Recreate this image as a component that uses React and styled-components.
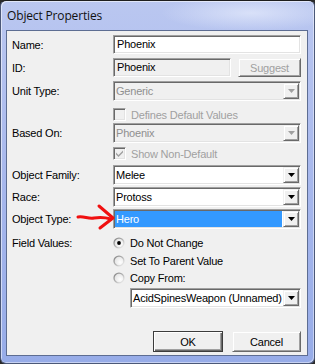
import React from "react";
import styled, { createGlobalStyle, css } from "styled-components";

const GlobalStyle = createGlobalStyle`
  html, body { margin: 0; padding: 0; background: #2a2a2a; }
  body { font-family: "Liberation Sans", Arial, sans-serif; }
  * { box-sizing: border-box; }
`;

const uiText = css`
  font-family: "Liberation Sans", Arial, sans-serif;
  font-size: 11px;
  letter-spacing: -0.2px;
`;

const Window = styled.div`
  position: relative;
  width: 315px;
  height: 364px;
  display: flex;
  flex-direction: column;
  padding: 0 6px 7px 5px;
  border: 1px solid #4b5878;
  border-top-color: #1e1e1e;
  border-radius: 6px;
  background:
    radial-gradient(ellipse 90px 18px at 250px 12px, rgba(230, 236, 252, 0.7), rgba(230, 236, 252, 0) 100%),
    linear-gradient(180deg, #bac7f0 0%, #b3c1ef 20%, #a5b6ec 55%, #97ace8 100%);
  box-shadow: inset 1px 1px 0 rgba(255, 255, 255, 0.55), inset -1px -1px 0 rgba(255, 255, 255, 0.45);
`;

const TitleBar = styled.div`
  height: 29px;
  display: flex;
  align-items: center;
  padding-left: 1px;
  padding-bottom: 1px;
`;

const Title = styled.span`
  font-family: "Open Sans", "Noto Sans", sans-serif;
  font-size: 12px;
  color: #111;
  letter-spacing: -0.15px;
`;

const Client = styled.div`
  flex: 1;
  background: #f0f0f0;
  border: 1px solid #5d6d92;
  padding: 4px 6px 0 5px;
  display: flex;
  flex-direction: column;
  ${uiText};
  color: #000;
`;

const Row = styled.div`
  position: relative;
  display: grid;
  grid-template-columns: 101px 188px;
  align-items: center;
  height: ${(p) => p.$h}px;
  margin-top: ${(p) => p.$mt || 0}px;
`;

const Label = styled.span`
  ${uiText};
  color: #000;
  white-space: nowrap;
`;

const sunken = css`
  border: 1px solid;
  border-color: #a0a0a0 #ffffff #ffffff #a0a0a0;
  box-shadow: inset 1px 1px 0 #696969, inset -1px -1px 0 #e3e3e3;
`;

const raised = css`
  border: 1px solid;
  border-color: #f0f0f0 #696969 #696969 #f0f0f0;
  box-shadow: inset 1px 1px 0 #ffffff, inset -1px -1px 0 #a0a0a0;
`;

const Edit = styled.div`
  ${sunken};
  height: 19px;
  width: ${(p) => p.$w || 188}px;
  background: ${(p) => (p.$readOnly ? "#f0f0f0" : "#ffffff")};
  padding: 0 3px;
  line-height: 17px;
  ${uiText};
  color: #000;
  white-space: nowrap;
`;

const FieldGroup = styled.div`
  display: flex;
  align-items: center;
  gap: ${(p) => p.$gap || 0}px;
  padding-left: ${(p) => p.$indent || 0}px;
`;

const PushButton = styled.button`
  ${raised};
  width: ${(p) => p.$w}px;
  height: ${(p) => p.$h}px;
  background: #f0f0f0;
  ${uiText};
  color: ${(p) => (p.disabled ? "#a0a0a0" : "#000")};
  padding: 0;
  ${(p) =>
    p.$default &&
    css`
      border: 1px solid #3c3c3c;
      box-shadow: inset 1px 1px 0 #ffffff, inset -1px -1px 0 #696969, inset -2px -2px 0 #a0a0a0;
    `}
`;

const ComboBox = styled.div`
  ${sunken};
  height: 20px;
  width: ${(p) => p.$w || 188}px;
  padding: 1px;
  display: flex;
  background: ${(p) => (p.$disabled ? "#f0f0f0" : "#ffffff")};
`;

const ComboText = styled.div`
  flex: 1;
  display: flex;
  align-items: center;
  padding-left: 1px;
  margin-right: 1px;
  ${uiText};
  white-space: nowrap;
  overflow: hidden;
  color: ${(p) => (p.$disabled ? "#8f8f8f" : p.$selected ? "#ffffff" : "#000")};
  background: ${(p) => (p.$selected ? "#3399ff" : "transparent")};
`;

const DropButton = styled.div`
  ${raised};
  flex: none;
  width: 16px;
  height: 16px;
  background: #f0f0f0;
  display: flex;
  align-items: center;
  justify-content: center;
  color: ${(p) => (p.$disabled ? "#a0a0a0" : "#000")};
`;

const CheckBox = styled.div`
  ${sunken};
  width: 13px;
  height: 13px;
  background: ${(p) => (p.$disabled ? "#f0f0f0" : "#ffffff")};
  display: flex;
  align-items: center;
  justify-content: center;
`;

const OptionText = styled.span`
  ${uiText};
  color: ${(p) => (p.$disabled ? "#a0a0a0" : "#000")};
  white-space: nowrap;
`;

const ButtonBar = styled.div`
  display: flex;
  justify-content: flex-end;
  gap: 9px;
  margin-top: 23px;
`;

const Annotation = styled.svg`
  position: absolute;
  left: 64px;
  top: -4px;
  overflow: visible;
`;

const Arrow = () => (
  <svg width="7" height="4" viewBox="0 0 7 4">
    <path d="M0 0h7L3.5 4z" fill="currentColor" />
  </svg>
);

function Combo({ value, disabled, selected, w }) {
  return (
    <ComboBox $disabled={disabled} $w={w}>
      <ComboText $disabled={disabled} $selected={selected}>{value}</ComboText>
      <DropButton $disabled={disabled}>
        <Arrow />
      </DropButton>
    </ComboBox>
  );
}

function Radio({ checked }) {
  return (
    <svg width="12" height="12" viewBox="0 0 12 12">
      <defs>
        <linearGradient id="rg" x1="0" y1="0" x2="1" y2="1">
          <stop offset="0" stopColor="#7a7a7a" />
          <stop offset="0.5" stopColor="#b5b5b5" />
          <stop offset="1" stopColor="#ffffff" />
        </linearGradient>
        <radialGradient id="rf" cx="0.65" cy="0.65" r="0.7">
          <stop offset="0" stopColor="#ffffff" />
          <stop offset="1" stopColor="#e4e4e4" />
        </radialGradient>
      </defs>
      <circle cx="6" cy="6" r="5.6" fill="url(#rg)" />
      <circle cx="6" cy="6" r="4.3" fill="url(#rf)" />
      {checked && <circle cx="6" cy="6" r="1.9" fill="#000" />}
    </svg>
  );
}

function Check({ checked, disabled }) {
  return (
    <CheckBox $disabled={disabled}>
      {checked && (
        <svg width="7" height="7" viewBox="0 0 7 7">
          <path d="M0 2.5l2.5 2.5L7 0.5v2L2.5 7 0 4.5z" fill="#a0a0a0" />
        </svg>
      )}
    </CheckBox>
  );
}

export default function App() {
  return (
    <>
      <GlobalStyle />
      <Window>
        <TitleBar>
          <Title>Object Properties</Title>
        </TitleBar>
        <Client>
          <Row $h={19}>
            <Label>Name:</Label>
            <Edit>Phoenix</Edit>
          </Row>
          <Row $h={19} $mt={4}>
            <Label>ID:</Label>
            <FieldGroup $gap={7}>
              <Edit $w={118} $readOnly>Phoenix</Edit>
              <PushButton $w={63} $h={19} disabled>Suggest</PushButton>
            </FieldGroup>
          </Row>
          <Row $h={20} $mt={4}>
            <Label>Unit Type:</Label>
            <Combo value="Generic" disabled />
          </Row>
          <Row $h={13} $mt={7}>
            <span />
            <FieldGroup $gap={5}>
              <Check disabled />
              <OptionText $disabled>Defines Default Values</OptionText>
            </FieldGroup>
          </Row>
          <Row $h={20} $mt={2}>
            <Label>Based On:</Label>
            <Combo value="Phoenix" disabled />
          </Row>
          <Row $h={13} $mt={4}>
            <span />
            <FieldGroup $gap={5}>
              <Check disabled checked />
              <OptionText $disabled>Show Non-Default</OptionText>
            </FieldGroup>
          </Row>
          <Row $h={20} $mt={5}>
            <Label>Object Family:</Label>
            <Combo value="Melee" />
          </Row>
          <Row $h={20} $mt={2}>
            <Label>Race:</Label>
            <Combo value="Protoss" />
          </Row>
          <Row $h={20} $mt={2}>
            <Label>Object Type:</Label>
            <Combo value="Hero" selected />
            <Annotation width="40" height="26" viewBox="0 0 40 26">
              <g fill="none" stroke="#f01010" strokeWidth="3" strokeLinecap="round" strokeLinejoin="round">
                <path d="M2 12 C8 11 12 14 18 13 S28 12 35 14" />
                <path d="M23 1 L37 13 L24 23" />
              </g>
            </Annotation>
          </Row>
          <Row $h={13} $mt={7}>
            <Label>Field Values:</Label>
            <FieldGroup $gap={5}>
              <Radio checked />
              <OptionText>Do Not Change</OptionText>
            </FieldGroup>
          </Row>
          <Row $h={13} $mt={5}>
            <span />
            <FieldGroup $gap={5}>
              <Radio />
              <OptionText>Set To Parent Value</OptionText>
            </FieldGroup>
          </Row>
          <Row $h={13} $mt={4}>
            <span />
            <FieldGroup $gap={5}>
              <Radio />
              <OptionText>Copy From:</OptionText>
            </FieldGroup>
          </Row>
          <Row $h={20} $mt={4}>
            <span />
            <FieldGroup $indent={17}>
              <Combo value="AcidSpinesWeapon (Unnamed)" w={171} />
            </FieldGroup>
          </Row>
          <ButtonBar>
            <PushButton $w={70} $h={21} $default>OK</PushButton>
            <PushButton $w={69} $h={21}>Cancel</PushButton>
          </ButtonBar>
        </Client>
      </Window>
    </>
  );
}
